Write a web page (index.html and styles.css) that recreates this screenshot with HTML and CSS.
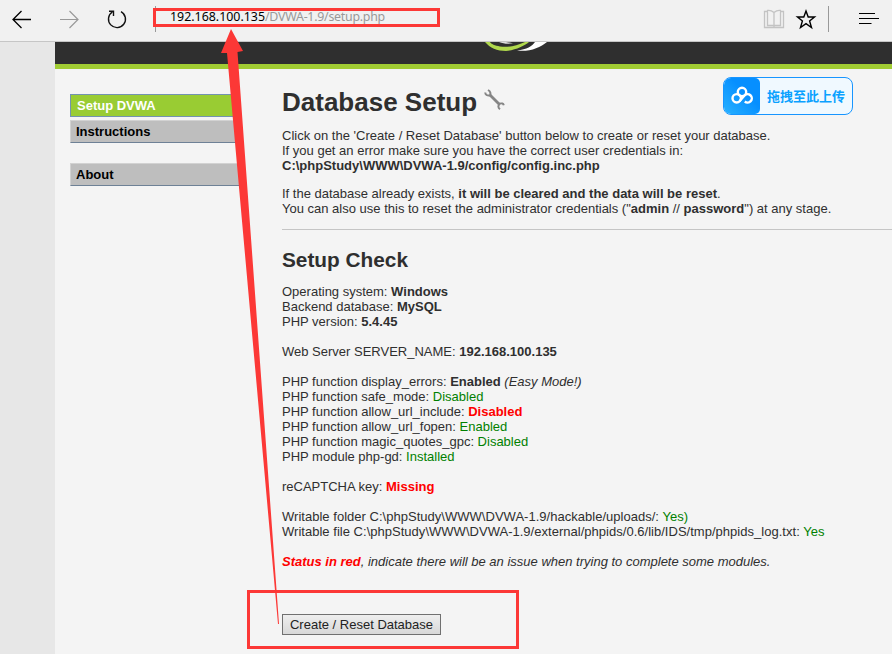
FILE: index.html
```html
<!DOCTYPE html>
<html lang="en">
<head>
<meta charset="utf-8">
<title>Database Setup</title>
<link rel="stylesheet" href="styles.css">
</head>
<body>
<header class="toolbar">
  <svg class="nav-icons" width="155" height="41" viewBox="0 0 155 41" fill="none">
    <path d="M31 19.5H13M21.5 11L13 19.5L21.5 28" stroke="#000" stroke-width="1.3"/>
    <path d="M60 19.5H78M69.5 11L78 19.5L69.5 28" stroke="#999" stroke-width="1.2"/>
    <path d="M112.3 12A8.5 8.5 0 1 0 121 11.6M109 11.2H113.5V16" stroke="#111" stroke-width="1.4"/>
  </svg>
  <div class="address"><span class="host">192.168.100.135</span><span class="path">/DVWA-1.9/setup.php</span></div>
  <svg class="tool-icons" width="132" height="41" viewBox="760 0 132 41" fill="none">
    <path d="M768 11.500H764.500V27.500H783.500V11.500H780M774 12.500Q771 10 767.500 10.500V25.500H780.500V10.500Q777 10 774 12.500V27" stroke="#c3c3c3" stroke-width="1.300"/>
    <path d="M806 11L808.2 17H814.5L809.6 20.9L811.5 27.5L806 23.6L800.5 27.5L802.4 20.9L797.5 17H803.8Z" stroke="#000" stroke-width="1.4"/>
    <path d="M828.5 6V32" stroke="#999"/>
    <path d="M859 13.5H875M859 18.5H879M859 23.5H871.500" stroke="#000" stroke-width="1.2"/>
  </svg>
</header>
<div class="page">
  <div class="site">
    <div class="banner">
      <svg width="70" height="22" viewBox="480 42 70 22">
        <path d="M485 42C490 48 497 51 506 51C516 50 524 46 529 42H525C516 46 508 47.500 500 46.500C495 45.500 491 44 490 42Z" fill="#b0d84d"/>
        <path d="M499 42C504 44 508 44 513 43.300L506 42Z" fill="#ddd"/>
        <path d="M517 50.500C527 49.500 532 46 535 42H547C540 48 529 52 517 50.500Z" fill="#fff"/>
      </svg>
    </div>
    <div class="columns">
      <nav class="menu">
        <a class="item selected">Setup DVWA</a>
        <a class="item">Instructions</a>
        <a class="item about">About</a>
      </nav>
      <main class="content">
        <h1><span class="title">Database Setup</span>
          <svg width="22" height="22" viewBox="0 0 22 22" fill="none" stroke="#858585"><path d="M6 6L15.500 15.500" stroke-width="2.800"/><path d="M1.200 3.500Q1.500 7 6 6.500Q7.500 3 4 1M19.800 16.200Q19 13.500 15.500 14.800Q13 18 16 20.300" stroke-width="2"/></svg>
        </h1>
        <p>Click on the 'Create / Reset Database' button below to create or reset your database.<br>If you get an error make sure you have the correct user credentials in:<br><b>C:\phpStudy\WWW\DVWA-1.9/config/config.inc.php</b></p>
        <p>If the database already exists, <b>it will be cleared and the data will be reset</b>.<br>You can also use this to reset the administrator credentials ("<b>admin</b> // <b>password</b>") at any stage.</p>
        <hr>
        <h2>Setup Check</h2>
        <div class="checks">Operating system: <b>Windows</b><br>Backend database: <b>MySQL</b><br>PHP version: <b>5.4.45</b><br><br>Web Server SERVER_NAME: <b>192.168.100.135</b><br><br>PHP function display_errors: <b>Enabled</b> <i>(Easy Mode!)</i><br>PHP function safe_mode: <span class="ok">Disabled</span><br>PHP function allow_url_include: <b class="bad">Disabled</b><br>PHP function allow_url_fopen: <span class="ok">Enabled</span><br>PHP function magic_quotes_gpc: <span class="ok">Disabled</span><br>PHP module php-gd: <span class="ok">Installed</span><br><br>reCAPTCHA key: <b class="bad">Missing</b><br><br><span class="paths">Writable folder C:\phpStudy\WWW\DVWA-1.9/hackable/uploads/: <span class="ok">Yes)</span><br>Writable file C:\phpStudy\WWW\DVWA-1.9/external/phpids/0.6/lib/IDS/tmp/phpids_log.txt: <span class="ok">Yes</span></span><br><br><i><b class="bad">Status in red</b>, indicate there will be an issue when trying to complete some modules.</i></div>
        <button class="create">Create / Reset Database</button>
      </main>
    </div>
  </div>
</div>
<div class="upload">
  <div class="upload-icon">
    <svg width="22" height="20" viewBox="0 0 22 20" fill="none" stroke="#fff" stroke-width="2.400"><circle cx="11" cy="6" r="4.200"/><circle cx="5.700" cy="12.300" r="4.200"/><path d="M8.500 15.300L13.500 9.500A4.200 4.200 0 1 1 13.800 15.500"/></svg>
  </div>
  <span class="upload-text">拖拽至此上传</span>
</div>
<svg class="marks" width="892" height="654" viewBox="0 0 892 654">
  <path d="M154.500 9.500H438.500V25.500H154.500ZM248.500 591.500H517.500V647.500H248.500Z" fill="none" stroke="#fc3836" stroke-width="3"/>
  <path d="M231 29L243 51L237.500 52L279 624H278L227 53L221 53Z" fill="#fc3836"/>
</svg>
</body>
</html>
```

FILE: styles.css
```css
* { box-sizing: border-box; }
body {
  margin: 0;
  height: 654px;
  overflow: hidden;
  position: relative;
  background: #e7e7e7;
  color: #2f2f2f;
  font: 13px/15px "Liberation Sans", Arial, sans-serif;
}
.toolbar {
  height: 42px;
  display: flex;
  background: #f1f1f1;
  border-bottom: 1px solid #c6c6c6;
}
.address {
  width: 605px;
  height: 26px;
  margin-top: 6px;
  padding-left: 14px;
  border-left: 1px solid #999;
  font: 12.4px/21px "Noto Sans", sans-serif;
  white-space: nowrap;
}
.host { color: #000; }
.path { color: #999; letter-spacing: -0.26px; }
.page { height: 612px; padding-left: 55px; }
.site { height: 100%; background: #f4f4f4; }
.banner {
  height: 27px;
  padding-left: 425px;
  background: #2f2f2f;
  border-bottom: 5px solid #a1cc33;
}
.banner svg { display: block; }
.columns { display: flex; padding-left: 15px; }
.menu { width: 212px; padding-top: 25px; }
.item {
  display: block;
  width: 170px;
  height: 23px;
  margin-bottom: 3px;
  padding-left: 5px;
  border: 1px solid #d2d2d2;
  border-right: 0;
  border-bottom-color: #6e8196;
  background: #bebebe;
  color: #000;
  font-weight: bold;
  line-height: 21px;
}
.selected {
  width: 168px;
  padding-left: 6px;
  border-color: #7393b0;
  background: #9c3;
  color: #fff;
}
.about { margin-top: 20px; }
.content { flex: 1; white-space: nowrap; }
h1 {
  display: flex;
  gap: 7px;
  margin: 18px 0 11px;
  font-size: 26px;
  line-height: 30px;
}
h1 svg { margin-top: 2px; }
p { margin: 0 0 13px; }
hr { height: 1px; margin: 0; border: 0; background: #c5c5c5; }
h2 { margin: 18px 0 12px; font-size: 20.8px; line-height: 24px; }
.paths { letter-spacing: 0.022px; }
.ok { color: #008000; }
.bad { color: #f00; }
.create {
  display: block;
  width: 159px;
  height: 21px;
  margin-top: 45px;
  padding: 0;
  border: 1px solid #707070;
  background: linear-gradient(#eee, #d8d8d8);
  color: #222;
  font: 13px/17px "Liberation Sans", Arial, sans-serif;
}
.upload {
  position: absolute;
  left: 723px;
  top: 77px;
  width: 130px;
  height: 38px;
  display: flex;
  overflow: hidden;
  border: 1px solid #1795ff;
  border-radius: 8px;
  background: #f0f9ff;
}
.upload-icon {
  width: 36px;
  height: 36px;
  padding: 8px 7px;
  border-radius: 0 5px 5px 0;
  background: linear-gradient(45deg, #28b1ff, #068fff 60%);
}
.upload-text {
  padding-left: 7px;
  color: #0aa1ff;
  font: bold 13px/36px "Noto Sans CJK SC", sans-serif;
}
.marks { position: absolute; left: 0; top: 0; pointer-events: none; }
```
